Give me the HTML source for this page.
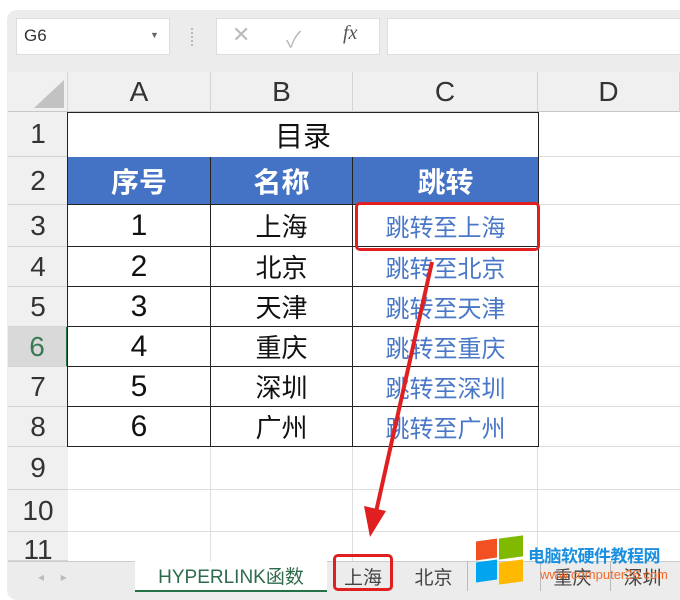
<!DOCTYPE html><html><head><meta charset="utf-8"><style>
*{margin:0;padding:0;box-sizing:border-box}
body{width:680px;height:595px;background:#fff;position:relative;overflow:hidden;font-family:"Liberation Sans","Noto Sans CJK SC",sans-serif}
.a{position:absolute}
.c{position:absolute;display:flex;align-items:center;justify-content:center;white-space:nowrap}
.rh{left:8px;width:60px;font-size:28px;color:#333;background:#f0f0f0;border-bottom:1px solid #d4d4d4}
.ch{top:72px;height:40px;font-size:28px;color:#333;background:#f0f0f0;border-right:1px solid #d4d4d4;border-bottom:1px solid #c8c8c8}
.d{font-size:26px;color:#111;border-right:1px solid #222;border-bottom:1px solid #222}
.lk{color:#4a78c8;font-size:24px}
.hl{position:absolute;left:538px;width:142px;height:1px;background:#ddd}
</style></head><body>
<div class="a" style="left:7px;top:10px;width:690px;height:590px;background:#ececec;border-radius:10px"></div>
<div class="a" style="left:16px;top:18px;width:154px;height:37px;background:#fff;border:1px solid #ddd"></div>
<div class="a" style="left:24px;top:26px;font-size:17px;color:#333">G6</div>
<div class="a" style="left:150px;top:30px;font-size:9px;color:#666">▼</div>
<div class="a" style="left:191px;top:28px;width:3px;height:18px;border-left:2px dotted #bbb"></div>
<div class="a" style="left:216px;top:18px;width:164px;height:37px;background:#fff;border:1px solid #ddd"></div>
<div class="a" style="left:232px;top:22px;font-size:22px;color:#bbb">✕</div>
<div class="a" style="left:286px;top:22px;font-size:22px;color:#bbb">✓</div>
<div class="a" style="left:343px;top:22px;font-size:20px;color:#555;font-family:'Liberation Serif',serif;font-style:italic">fx</div>
<div class="a" style="left:387px;top:18px;width:300px;height:37px;background:#fff;border:1px solid #ddd"></div>
<div class="a" style="left:8px;top:72px;width:672px;height:489px;background:#fff"></div>
<div class="a" style="left:8px;top:72px;width:60px;height:40px;background:#f0f0f0;border-bottom:1px solid #c8c8c8;border-right:1px solid #d4d4d4"></div>
<div class="a" style="left:34px;top:80px;width:0;height:0;border-left:30px solid transparent;border-bottom:28px solid #c2c2c2"></div>
<div class="c ch" style="left:68px;width:143px">A</div>
<div class="c ch" style="left:211px;width:142px">B</div>
<div class="c ch" style="left:353px;width:185px">C</div>
<div class="c ch" style="left:538px;width:142px">D</div>
<div class="c rh" style="top:112px;height:45px">1</div>
<div class="c rh" style="top:157px;height:48px">2</div>
<div class="c rh" style="top:205px;height:42px">3</div>
<div class="c rh" style="top:247px;height:40px">4</div>
<div class="c rh" style="top:287px;height:40px">5</div>
<div class="c rh" style="top:327px;height:40px;background:#d9d9d9;color:#3a7a55;border-right:2px solid #217346">6</div>
<div class="c rh" style="top:367px;height:40px">7</div>
<div class="c rh" style="top:407px;height:40px">8</div>
<div class="c rh" style="top:447px;height:43px">9</div>
<div class="c rh" style="top:490px;height:42px">10</div>
<div class="c rh" style="top:532px;height:29px;align-items:flex-start;padding-top:2px">11</div>
<div class="a" style="left:68px;top:447px;width:612px;height:114px;background:
linear-gradient(#ddd,#ddd) 0 42px/612px 1px no-repeat,
linear-gradient(#ddd,#ddd) 0 84px/612px 1px no-repeat,
linear-gradient(#ddd,#ddd) 142px 0/1px 114px no-repeat,
linear-gradient(#ddd,#ddd) 284px 0/1px 114px no-repeat,
linear-gradient(#ddd,#ddd) 469px 0/1px 114px no-repeat"></div>
<div class="hl" style="top:156px"></div><div class="hl" style="top:204px"></div><div class="hl" style="top:246px"></div><div class="hl" style="top:286px"></div><div class="hl" style="top:326px"></div><div class="hl" style="top:366px"></div><div class="hl" style="top:406px"></div><div class="hl" style="top:446px"></div>
<div class="c d" style="left:68px;top:112px;width:471px;height:46px;border-top:1px solid #222;font-size:28px">目录</div>
<div class="c d" style="left:68px;top:157px;width:143px;height:48px;background:#4472c4;color:#fff;font-weight:bold;font-size:28px">序号</div>
<div class="c d" style="left:211px;top:157px;width:142px;height:48px;background:#4472c4;color:#fff;font-weight:bold;font-size:28px">名称</div>
<div class="c d" style="left:353px;top:157px;width:186px;height:48px;background:#4472c4;color:#fff;font-weight:bold;font-size:28px">跳转</div>
<div class="c d" style="left:68px;top:205px;width:143px;height:42px;font-size:30px">1</div>
<div class="c d" style="left:211px;top:205px;width:142px;height:42px">上海</div>
<div class="c d lk" style="left:353px;top:205px;width:186px;height:42px">跳转至上海</div>
<div class="c d" style="left:68px;top:247px;width:143px;height:40px;font-size:30px">2</div>
<div class="c d" style="left:211px;top:247px;width:142px;height:40px">北京</div>
<div class="c d lk" style="left:353px;top:247px;width:186px;height:40px">跳转至北京</div>
<div class="c d" style="left:68px;top:287px;width:143px;height:40px;font-size:30px">3</div>
<div class="c d" style="left:211px;top:287px;width:142px;height:40px">天津</div>
<div class="c d lk" style="left:353px;top:287px;width:186px;height:40px">跳转至天津</div>
<div class="c d" style="left:68px;top:327px;width:143px;height:40px;font-size:30px">4</div>
<div class="c d" style="left:211px;top:327px;width:142px;height:40px">重庆</div>
<div class="c d lk" style="left:353px;top:327px;width:186px;height:40px">跳转至重庆</div>
<div class="c d" style="left:68px;top:367px;width:143px;height:40px;font-size:30px">5</div>
<div class="c d" style="left:211px;top:367px;width:142px;height:40px">深圳</div>
<div class="c d lk" style="left:353px;top:367px;width:186px;height:40px">跳转至深圳</div>
<div class="c d" style="left:68px;top:407px;width:143px;height:40px;font-size:30px">6</div>
<div class="c d" style="left:211px;top:407px;width:142px;height:40px">广州</div>
<div class="c d lk" style="left:353px;top:407px;width:186px;height:40px">跳转至广州</div>
<div class="a" style="left:67px;top:112px;width:1px;height:335px;background:#222"></div>
<div class="a" style="left:8px;top:561px;width:672px;height:34px;background:#ececec;border-top:1px solid #ccc"></div>
<div class="a" style="left:38px;top:570px;font-size:12px;color:#bbb;white-space:nowrap">◂&nbsp;&nbsp;&nbsp;&nbsp;&nbsp;▸</div>
<div class="c" style="left:135px;top:561px;width:192px;height:31px;background:#fff;border-bottom:2px solid #217346;color:#2e6b4a;font-size:19px">HYPERLINK函数</div>
<div class="c" style="left:333px;top:561px;width:60px;height:30px;font-size:19px;color:#444">上海</div>
<div class="c" style="left:400px;top:561px;width:68px;height:30px;font-size:19px;color:#444;border-right:1px solid #bbb">北京</div>
<div class="c" style="left:540px;top:561px;width:64px;height:30px;font-size:19px;color:#444;border-left:1px solid #bbb">重庆</div>
<div class="c" style="left:610px;top:561px;width:64px;height:30px;font-size:19px;color:#444;border-left:1px solid #bbb">深圳</div>
<div class="a" style="left:355px;top:202px;width:185px;height:49px;border:3px solid #e02020;border-radius:5px"></div>
<div class="a" style="left:333px;top:554px;width:60px;height:37px;border:3px solid #e02020;border-radius:5px"></div>
<svg class="a" style="left:0;top:0" width="680" height="595"><line x1="432" y1="262" x2="376" y2="512" stroke="#e02020" stroke-width="4"/><polygon points="364,506 386,511 370,537" fill="#e02020"/></svg>
<div class="a" style="left:476px;top:540px;width:21px;height:19px;background:#f25022;transform:skewY(-8deg)"></div>
<div class="a" style="left:499px;top:537px;width:24px;height:21px;background:#7fba00;transform:skewY(-8deg)"></div>
<div class="a" style="left:476px;top:561px;width:21px;height:20px;background:#00a4ef;transform:skewY(-8deg)"></div>
<div class="a" style="left:499px;top:561px;width:24px;height:22px;background:#ffb900;transform:skewY(-8deg)"></div>
<div class="a" style="left:528px;top:542px;font-size:17px;font-weight:bold;color:#1a8fe0;letter-spacing:-0.5px;white-space:nowrap">电脑软硬件教程网</div>
<div class="a" style="left:540px;top:567px;font-size:13px;color:#f06a2a;white-space:nowrap">www.computer26.com</div>
</body></html>
